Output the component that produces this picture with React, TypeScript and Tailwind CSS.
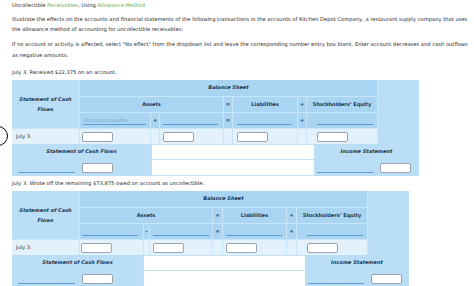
import React from "react";

const FONT = "font-['DejaVu_Sans',Verdana,sans-serif]";

function Box() {
  return <div className="h-[10px] w-[31px] rounded-[2px] border border-[#9aa3ab] bg-white" />;
}

function Pick({ w, ml = 3, label }: { w: number; ml?: number; label?: string }) {
  return (
    <div className="flex h-full items-end pb-[3px]">
      <div
        className="flex h-[9px] items-end border-b border-[#5a9bd3] pb-[1px] text-[5px] leading-none text-[#7ea6c6]"
        style={{ width: w, marginLeft: ml }}
      >
        {label}
      </div>
    </div>
  );
}

function Cell({ className = "", children }: { className?: string; children?: React.ReactNode }) {
  return <div className={`flex items-center justify-center ${className}`}>{children}</div>;
}

type Spec = {
  cols: string;
  op: string;
  fields: { w: number; ml: number }[];
  label?: string;
  bottom: [number, number, number];
  bottomSpec: { ulW: number; ulMl: number; boxMl: number; isW: number; isMl: number; isBoxMl: number };
};

function Sheet({ spec, width }: { spec: Spec; width: number }) {
  const dark = "bg-[#a9d5f2]";
  const light = "bg-[#b9def6]";
  const row = "bg-[#e2f1fb]";
  const head = "text-[5px] font-bold text-[#1c3553]";
  return (
    <div style={{ width }} className="text-[#1c3553]">
      <div className={`grid ${spec.cols} grid-rows-[16px_15px_15px_15px] gap-px bg-[#c9e6f8]`}>
        <Cell className={`row-span-3 ${light} ${head} italic text-center leading-[10px]`}>
          <span>
            Statement of Cash
            <br />
            Flows
          </span>
        </Cell>
        <Cell className={`col-span-7 ${dark} ${head} italic`}>Balance Sheet</Cell>
        <div className={`row-span-4 ${light}`} />

        <Cell className={`col-span-3 ${dark} ${head}`}>Assets</Cell>
        <Cell className={`${dark} ${head}`}>=</Cell>
        <Cell className={`${dark} ${head}`}>Liabilities</Cell>
        <Cell className={`${dark} ${head}`}>+</Cell>
        <Cell className={`${dark} ${head}`}>Stockholders’ Equity</Cell>

        <div className={dark}>
          <Pick w={spec.fields[0].w} ml={spec.fields[0].ml} label={spec.label} />
        </div>
        <Cell className={`${dark} ${head}`}>{spec.op}</Cell>
        <div className={dark}>
          <Pick w={spec.fields[1].w} ml={spec.fields[1].ml} />
        </div>
        <Cell className={`${dark} ${head}`}>=</Cell>
        <div className={dark}>
          <Pick w={spec.fields[2].w} ml={spec.fields[2].ml} />
        </div>
        <Cell className={`${dark} ${head}`}>+</Cell>
        <div className={dark}>
          <Pick w={spec.fields[3].w} ml={spec.fields[3].ml} />
        </div>

        <div className={`${row} flex items-center pl-[4px] text-[5.1px] text-[#333]`}>July 3.</div>
        <div className={`${row} flex items-center`} style={{ paddingLeft: spec.fields[0].ml - 1 }}>
          <Box />
        </div>
        <div className={row} />
        <div className={`${row} flex items-center`} style={{ paddingLeft: spec.fields[1].ml }}>
          <Box />
        </div>
        <div className={row} />
        <div className={`${row} flex items-center`} style={{ paddingLeft: spec.fields[2].ml }}>
          <Box />
        </div>
        <div className={row} />
        <div className={`${row} flex items-center`} style={{ paddingLeft: spec.fields[3].ml }}>
          <Box />
        </div>
      </div>

      <div className="flex h-[32px]">
        <div className={`${light} flex flex-col`} style={{ width: spec.bottom[0] }}>
          <div className={`flex h-[16px] items-center justify-center ${head} italic`}>
            Statement of Cash Flows
          </div>
          <div className="flex h-[16px] items-center">
            <div
              className="mt-[9px] h-px bg-[#5a9bd3]"
              style={{ width: spec.bottomSpec.ulW, marginLeft: spec.bottomSpec.ulMl }}
            />
            <div style={{ marginLeft: spec.bottomSpec.boxMl }}>
              <Box />
            </div>
          </div>
        </div>
        <div className="flex flex-col bg-white" style={{ width: spec.bottom[1] }}>
          <div className="h-[16px] border-y border-l border-[#c4e2f6]" />
          <div className="h-[16px] border-b border-l border-[#c4e2f6]" />
        </div>
        <div className={`${light} flex flex-col`} style={{ width: spec.bottom[2] }}>
          <div className={`flex h-[16px] items-center justify-center ${head} italic`}>
            Income Statement
          </div>
          <div className="flex h-[16px] items-center">
            <div
              className="mt-[9px] h-px bg-[#5a9bd3]"
              style={{ width: spec.bottomSpec.isW, marginLeft: spec.bottomSpec.isMl }}
            />
            <div style={{ marginLeft: spec.bottomSpec.isBoxMl }}>
              <Box />
            </div>
          </div>
        </div>
      </div>
    </div>
  );
}

const first: Spec = {
  cols: "grid-cols-[67px_70px_8px_63px_8px_64px_8px_70px_41px]",
  op: "+",
  label: "Accounts payable",
  fields: [
    { w: 63, ml: 3 },
    { w: 55, ml: 3 },
    { w: 55, ml: 4 },
    { w: 56, ml: 10 },
  ],
  bottom: [139, 163, 105],
  bottomSpec: { ulW: 57, ulMl: 6, boxMl: 7, isW: 57, isMl: 3, isBoxMl: 6 },
};

const second: Spec = {
  cols: "grid-cols-[67px_63px_5px_62px_9px_63px_9px_70px_41px]",
  op: "-",
  fields: [
    { w: 56, ml: 2 },
    { w: 56, ml: 3 },
    { w: 56, ml: 3 },
    { w: 56, ml: 10 },
  ],
  bottom: [131, 162, 104],
  bottomSpec: { ulW: 57, ulMl: 6, boxMl: 7, isW: 56, isMl: 3, isBoxMl: 7 },
};

export default function App() {
  return (
    <div className={`relative h-[286px] w-[474px] overflow-hidden bg-white px-[12px] ${FONT}`}>
      <div className="text-[5.2px] leading-[10px] text-[#2b2b2b]">
        <p className="whitespace-nowrap">
          Uncollectible <span className="text-[#6fae4c]">Receivables</span>, Using{" "}
          <span className="text-[#6fae4c]">Allowance Method</span>
        </p>
        <p className="mt-[4px] whitespace-nowrap">
          Illustrate the effects on the accounts and financial statements of the following transactions in the accounts of
          Kitchen Depot Company, a restaurant supply company that uses
          <br />
          the allowance method of accounting for uncollectible receivables:
        </p>
        <p className="mt-[5px] whitespace-nowrap leading-[11px]">
          If no account or activity is affected, select "No effect" from the dropdown list and leave the corresponding
          number entry box blank. Enter account decreases and cash outflows
          <br />
          as negative amounts.
        </p>
        <p className="mt-[6px] whitespace-nowrap">July 3. Received $22,375 on an account.</p>
      </div>

      <div className="mt-[3px]">
        <Sheet spec={first} width={407} />
      </div>

      <p className="mt-[2px] whitespace-nowrap text-[5.2px] leading-[10px] text-[#2b2b2b]">
        July 3. Wrote off the remaining $73,875 owed on account as uncollectible.
      </p>

      <div className="mt-[3px]">
        <Sheet spec={second} width={397} />
      </div>

      <div className="absolute left-[-12px] top-[126px] h-[20px] w-[20px] rounded-full border border-black" />
    </div>
  );
}
